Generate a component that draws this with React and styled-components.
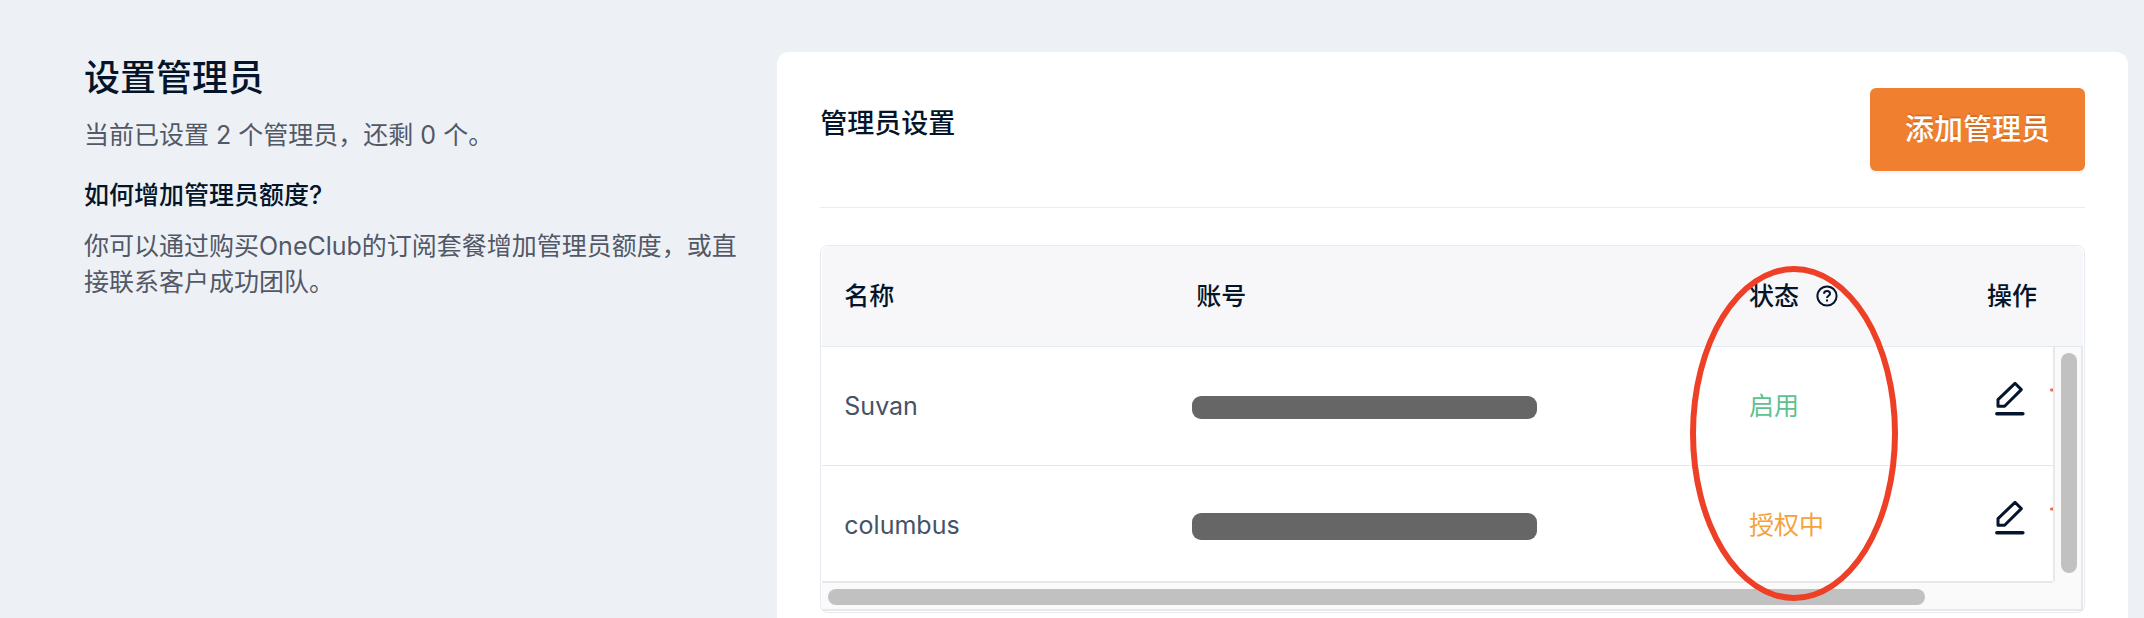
import React from 'react';
import styled, { createGlobalStyle } from 'styled-components';

const GlobalStyle = createGlobalStyle`
	* {
		box-sizing: border-box;
	}
	body {
		margin: 0;
		background: #edf1f6;
		color: #051529;
		font-family: Inter, 'Noto Sans CJK SC', sans-serif;
		font-size: 25px;
		line-height: 36px;
	}
	h1, h2, h3, p {
		margin: 0;
	}
`;

const Page = styled.main`
	height: 100vh;
	overflow: hidden;
	display: grid;
	grid-template-columns: minmax(0, 1fr) minmax(0, 2fr);
	gap: 18px;
	padding: 52px 16px 0 84px;
`;

const Intro = styled.section`
	padding: 2px 16px 0 0;
`;

const PageTitle = styled.h1`
	font-size: 36px;
	line-height: 48px;
	font-weight: 500;
`;

const Question = styled.h3`
	margin-top: 24px;
	font-size: 25px;
	font-weight: 500;
`;

const Text = styled.p`
	margin-top: 15px;
	color: #525866;
`;

const Card = styled.section`
	padding: 36px 43px;
	background: #fff;
	border-radius: 12px;
	align-self: start;
`;

const CardHeader = styled.header`
	display: flex;
	align-items: flex-start;
	justify-content: space-between;
	padding-bottom: 36px;
	border-bottom: 1px solid #ebecef;
`;

const CardTitle = styled.h2`
	padding: 18px 0;
	font-size: 27px;
	font-weight: 500;
`;

const AddButton = styled.button`
	padding: 24px 35px 23px;
	border: 0;
	border-radius: 6px;
	background: #f08030;
	box-shadow: 0 3px 0 rgba(0, 0, 0, 0.04);
	color: #fff;
	font: inherit;
	font-size: 29px;
	font-weight: 500;
	text-shadow: 0 -2px 0 rgba(0, 0, 0, 0.12);
	cursor: pointer;
`;

const Frame = styled.div`
	position: relative;
	margin-top: 37px;
	padding: 0 1px 1px;
	border: 1px solid #e5eaf3;
	border-radius: 8px;
`;

const Table = styled.table`
	width: 100%;
	table-layout: fixed;
	border-collapse: separate;
	border-spacing: 0;
`;

const HeadCell = styled.th`
	height: 101px;
	padding: 0 22px;
	background: #f7f7fa;
	border-bottom: 1px solid #e3eaf3;
	font-weight: 500;
	text-align: left;
	white-space: nowrap;
	&:first-child {
		border-top-left-radius: 8px;
	}
	&:last-child {
		border-top-right-radius: 8px;
	}
`;

const HeadLabel = styled.span`
	display: flex;
	align-items: center;
	gap: 17px;
`;

const Cell = styled.td`
	height: 119px;
	padding: 0 22px;
	border-bottom: 1px solid #e5e8f1;
	color: #465266;
	white-space: nowrap;
`;

const Status = styled.span`
	color: ${props => (props.$pending ? '#f5a23c' : '#5fc08f')};
`;

const Mask = styled.div`
	width: 345px;
	height: ${props => (props.$tall ? 27 : 23)}px;
	margin: 3px 0 0 -4px;
	border-radius: 9px;
	background: #666;
`;

const Actions = styled.div`
	display: flex;
	gap: 6px;
	padding-bottom: 14px;
`;

const IconButton = styled.button`
	flex: none;
	display: flex;
	padding: 0 8px;
	border: 0;
	background: none;
	color: ${props => (props.$danger ? '#ee6a48' : '#051530')};
	cursor: pointer;
`;

const ScrollArea = styled.div`
	display: grid;
	grid-template-columns: minmax(0, 1fr) 30px;
	grid-template-rows: 234px 30px;
`;

const Viewport = styled.div`
	overflow: hidden;
`;

const VerticalTrack = styled.div`
	padding: 6px 4px 8px 6px;
	background: #fafafa;
	border: solid #e8e8e8;
	border-width: 0 2px;
`;

const HorizontalTrack = styled.div`
	padding: 6px 6px 4px;
	background: #fafafa;
	border: solid #e8e8e8;
	border-width: 2px 0;
`;

const Corner = styled.div`
	background: #fafafa;
	border: solid #e8e8e8;
	border-width: 0 2px 2px 0;
`;

const Thumb = styled.div`
	width: ${props => props.$width};
	height: 100%;
	border-radius: 8px;
	background: #c1c1c1;
`;

const Highlight = styled.div`
	position: absolute;
	top: 20px;
	right: 186px;
	width: 208px;
	height: 335px;
	border: 6px solid #ee4026;
	border-radius: 50%;
	pointer-events: none;
`;

const HelpIcon = () => (
	<svg width="22" height="22" viewBox="0 0 22 22" fill="none" stroke="currentColor" strokeWidth="2">
		<circle cx="11" cy="11" r="9.6" />
		<path d="M8 8.8c0-1.7 1.3-2.8 3-2.8s3 1.1 3 2.7c0 2-3 2.2-3 4.4" />
		<path d="M11 14.6v2" />
	</svg>
);

const EditIcon = () => (
	<svg width="30" height="36" viewBox="0 0 30 36" fill="none" stroke="currentColor" strokeWidth="3" strokeLinejoin="round" strokeLinecap="round">
		<path d="M20 2.3l6.3 6.3L9.6 25.3H3v-6.7z" />
		<path d="M1.8 32.8h26.1" strokeWidth="3.4" />
	</svg>
);

const TrashIcon = () => (
	<svg width="36" height="36" viewBox="0 0 24 24" fill="none" stroke="currentColor" strokeWidth="2" strokeLinecap="round">
		<path d="M3 6h18M19 6v14a2 2 0 0 1-2 2H7a2 2 0 0 1-2-2V6M8 6V4a2 2 0 0 1 2-2h4a2 2 0 0 1 2 2v2" />
	</svg>
);

const Columns = ({ last }) => (
	<colgroup>
		<col width="352" />
		<col />
		<col width="238" />
		<col width={last} />
	</colgroup>
);

const admins = [
	{ name: 'Suvan', status: '启用' },
	{ name: 'columbus', status: '授权中', pending: true }
];

const AdminRow = ({ admin }) => (
	<tr>
		<Cell>{admin.name}</Cell>
		<Cell>
			<Mask $tall={admin.pending} />
		</Cell>
		<Cell>
			<Status $pending={admin.pending}>{admin.status}</Status>
		</Cell>
		<Cell>
			<Actions>
				<IconButton aria-label="编辑">
					<EditIcon />
				</IconButton>
				<IconButton $danger aria-label="删除">
					<TrashIcon />
				</IconButton>
			</Actions>
		</Cell>
	</tr>
);

const App = () => (
	<>
		<GlobalStyle />
		<Page>
			<Intro>
				<PageTitle>设置管理员</PageTitle>
				<Text>当前已设置 2 个管理员，还剩 0 个。</Text>
				<Question>如何增加管理员额度?</Question>
				<Text>你可以通过购买OneClub的订阅套餐增加管理员额度，或直接联系客户成功团队。</Text>
			</Intro>
			<Card>
				<CardHeader>
					<CardTitle>管理员设置</CardTitle>
					<AddButton>添加管理员</AddButton>
				</CardHeader>
				<Frame>
					<Table>
						<Columns last="118" />
						<thead>
							<tr>
								<HeadCell>名称</HeadCell>
								<HeadCell>账号</HeadCell>
								<HeadCell>
									<HeadLabel>
										状态
										<HelpIcon />
									</HeadLabel>
								</HeadCell>
								<HeadCell>操作</HeadCell>
							</tr>
						</thead>
					</Table>
					<ScrollArea>
						<Viewport>
							<Table>
								<Columns last="88" />
								<tbody>
									{admins.map(admin => (
										<AdminRow key={admin.name} admin={admin} />
									))}
								</tbody>
							</Table>
						</Viewport>
						<VerticalTrack>
							<Thumb $width="100%" />
						</VerticalTrack>
						<HorizontalTrack>
							<Thumb $width="90%" />
						</HorizontalTrack>
						<Corner />
					</ScrollArea>
					<Highlight />
				</Frame>
			</Card>
		</Page>
	</>
);

export default App;
